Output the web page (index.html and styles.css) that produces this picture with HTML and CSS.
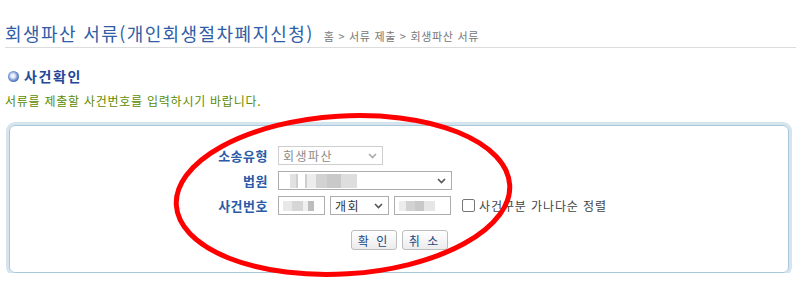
FILE: index.html
```html
<!DOCTYPE html>
<html lang="ko">
<head>
    <meta charset="UTF-8">
    <meta name="viewport" content="width=device-width, initial-scale=1.0">
    <title>회생파산 서류 - 사건확인</title>
    <link rel="stylesheet" href="styles.css">
</head>
<body>

<div class="page">
    <div class="page-head">
        <h1>회생파산 서류(개인회생절차폐지신청)</h1>
        <span class="crumbs">홈 &gt; 서류 제출 &gt; 회생파산 서류</span>
    </div>

    <h2 class="sub-title"><span class="bullet"></span>사건확인</h2>
    <p class="guide">서류를 제출할 사건번호를 입력하시기 바랍니다.</p>

    <div class="search-box">
        <div class="form-grid">
            <label>소송유형</label>
            <div class="field">
                <div class="sel sel-type disabled">
                    <span>회생파산</span>
                    <svg width="9" height="6" viewBox="0 0 9 6"><path d="M1 1l3.5 3.5L8 1" fill="none" stroke="#aaa" stroke-width="1.6"/></svg>
                </div>
            </div>

            <label>법원</label>
            <div class="field">
                <div class="sel sel-court">
                    <span class="mosaic mosaic-court"></span>
                    <svg width="9" height="6" viewBox="0 0 9 6"><path d="M1 1l3.5 3.5L8 1" fill="none" stroke="#555" stroke-width="1.6"/></svg>
                </div>
            </div>

            <label>사건번호</label>
            <div class="field">
                <div class="txt txt-year"><span class="mosaic mosaic-year"></span></div>
                <div class="sel sel-kind">
                    <span>개회</span>
                    <svg width="9" height="6" viewBox="0 0 9 6"><path d="M1 1l3.5 3.5L8 1" fill="none" stroke="#555" stroke-width="1.6"/></svg>
                </div>
                <div class="txt txt-no"><span class="mosaic mosaic-no"></span></div>
                <span class="check"></span>
                <span class="check-label">사건구분 가나다순 정렬</span>
            </div>
        </div>

        <div class="btn-row">
            <button>확 인</button>
            <button>취 소</button>
        </div>
    </div>
</div>

<!-- red marker drawn over the form -->
<svg class="marker" width="796" height="287" viewBox="0 0 796 287">
    <ellipse cx="343" cy="195" rx="167" ry="79" fill="none" stroke="#ff0000" stroke-width="5" transform="rotate(-3.5 343 195)"/>
</svg>

</body>
</html>
```

FILE: styles.css
```css
body {
    margin: 0;
    padding: 0;
    background-color: #fff;
    font-family: "Noto Sans CJK KR", "Noto Sans", sans-serif;
}

.page {
    padding-left: 5px;
}

.page-head {
    display: flex;
    align-items: baseline;
    gap: 10px;
    padding: 22px 0 3px 0;
    border-bottom: 1px solid #dcdcdc;
}

.page-head h1 {
    margin: 0;
    font-size: 18px;
    line-height: 22px;
    font-weight: normal;
    color: #2f5ea6;
    letter-spacing: 1.4px;
}

.crumbs {
    font-size: 11px;
    color: #777;
    letter-spacing: 0.7px;
}

.sub-title {
    display: flex;
    align-items: center;
    gap: 5px;
    margin: 18px 0 0 3px;
    font-size: 14px;
    line-height: 20px;
    font-weight: bold;
    color: #23489a;
    letter-spacing: 1.6px;
}

.bullet {
    width: 11px;
    height: 11px;
    border-radius: 50%;
    background: radial-gradient(circle at 45% 45%, #fff 0, #dfe8f8 25%, #7d9bd6 50%, #3559a8 80%, #2a4a90 100%);
}

.guide {
    margin: 7px 0 0 0;
    font-size: 12px;
    line-height: 16px;
    color: #5c8c00;
    letter-spacing: 0.75px;
}

.search-box {
    margin: 16px 7px 0 4px;
    padding: 20px 0 22px 0;
    border: 1px solid #a7c7dd;
    border-radius: 6px;
    box-shadow: 0 0 0 3px #d6e4ee;
}

.form-grid {
    display: grid;
    grid-template-columns: 60px auto;
    column-gap: 10px;
    row-gap: 6px;
    padding-left: 198px;
}

.form-grid label {
    text-align: right;
    font-size: 13px;
    line-height: 19px;
    font-weight: bold;
    color: #2a5aa8;
    letter-spacing: 0.5px;
}

.field {
    display: flex;
    align-items: center;
    gap: 5px;
    height: 19px;
}

.sel,
.txt {
    box-sizing: border-box;
    height: 19px;
    border: 1px solid #adadad;
    background-color: #fff;
    display: flex;
    align-items: center;
    justify-content: space-between;
    padding: 0 5px 0 4px;
    font-size: 12px;
    color: #333;
    letter-spacing: 1.5px;
}

.sel.disabled {
    border-color: #cfcfcf;
    color: #8a8a8a;
}

.sel-type { width: 105px; }
.sel-court { width: 174px; }
.sel-kind { width: 59px; }
.txt-year { width: 47px; }
.txt-no { width: 57px; }

.mosaic {
    display: block;
    height: 14px;
}

.mosaic-court {
    width: 74px;
    background:
        linear-gradient(90deg, #fff 0 10%, transparent 10% 20%, #fff 20% 30%, transparent 30% 100%),
        linear-gradient(90deg, #e2e2e2 0 18%, #cfcfcf 18% 32%, #ededed 32% 45%, #d2d2d2 45% 60%, #c9c9c9 60% 78%, #dedede 78% 100%);
}

.mosaic-year {
    width: 36px;
    height: 10px;
    background: linear-gradient(90deg, #e8e8e8 0 25%, #d6d6d6 25% 55%, #f0f0f0 55% 70%, #bdbdbd 70% 85%, #fff 85% 100%);
}

.mosaic-no {
    width: 36px;
    height: 10px;
    background: linear-gradient(90deg, #ececec 0 20%, #d2d2d2 20% 45%, #c8c8c8 45% 70%, #e6e6e6 70% 100%);
}

.check {
    width: 13px;
    height: 13px;
    box-sizing: border-box;
    border: 1px solid #767676;
    border-radius: 2px;
    margin-left: 6px;
}

.check-label {
    margin-left: -1px;
    font-size: 12px;
    color: #444;
    letter-spacing: 0.9px;
}

.btn-row {
    display: flex;
    justify-content: center;
    gap: 5px;
    margin-top: 15px;
}

.btn-row button {
    width: 46px;
    height: 20px;
    padding: 0;
    border: 1px solid #bdbdbd;
    border-radius: 3px;
    background: linear-gradient(#fff, #ececec);
    font-family: "Noto Sans CJK KR", sans-serif;
    font-size: 12px;
    letter-spacing: 2px;
    color: #1f4a86;
    cursor: pointer;
}

.marker {
    position: absolute;
    left: 0;
    top: 0;
    pointer-events: none;
}
```
